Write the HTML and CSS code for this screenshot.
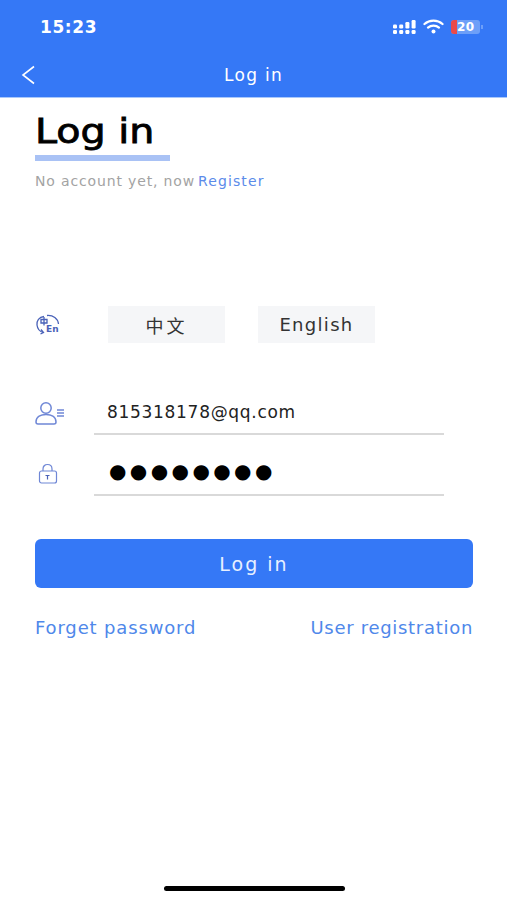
FILE: index.html
```html
<!DOCTYPE html>
<html lang="en">

<head>
    <meta charset="utf-8">
    <meta name="viewport" content="width=device-width, initial-scale=1.0">
    <title>Log in</title>
    <link rel="stylesheet" href="styles.css">
</head>

<body>

    <header class="topbar">
        <div class="status">
            <span class="tid">15:23</span>
            <div class="status-ikoner">
                <svg class="signal" width="23" height="14" viewBox="0 0 23 14">
                    <g fill="#fff">
                        <rect x="0" y="4.5" width="4" height="4" rx="1.2" />
                        <rect x="0" y="10" width="4" height="4" rx="1.2" />
                        <rect x="6.2" y="4.5" width="4" height="4" rx="1.2" />
                        <rect x="6.2" y="10" width="4" height="4" rx="1.2" />
                        <rect x="12.4" y="2" width="4" height="6.5" rx="1.2" />
                        <rect x="12.4" y="10" width="4" height="4" rx="1.2" />
                        <rect x="18.6" y="0" width="4" height="8.5" rx="1.2" />
                        <rect x="18.6" y="10" width="4" height="4" rx="1.2" />
                    </g>
                </svg>
                <svg class="wifi" width="21" height="15" viewBox="0 0 21 15">
                    <g fill="none" stroke="#fff" stroke-width="2.3" stroke-linecap="round">
                        <path d="M1.5 5 C6.5 0.6 14.5 0.6 19.5 5" />
                        <path d="M5 8.6 C8 6 13 6 16 8.6" />
                    </g>
                    <circle cx="10.5" cy="12.4" r="2" fill="#fff" />
                </svg>
                <div class="batteri">
                    <span class="batteri-rod"></span>
                    <span class="batteri-tal">20</span>
                </div>
            </div>
        </div>
        <nav class="navbar">
            <svg class="tilbage" width="14" height="20" viewBox="0 0 14 20">
                <path d="M13 1.5 L2 10 L13 18.5" fill="none" stroke="#fff" stroke-width="1.6" />
            </svg>
            <span class="navbar-titel">Log in</span>
        </nav>
    </header>

    <main class="indhold">
        <h1 class="titel"><span class="titel-tekst">Log in</span></h1>
        <p class="ingen-konto">No account yet, now<a class="register">Register</a></p>

        <div class="sprog-raekke">
            <svg class="ikon" width="26" height="22" viewBox="0 0 26 22">
                <g fill="none" stroke="#4a62b8" stroke-width="1.3">
                    <path d="M9 2.5 C4 3 1.5 7 2 11 C2.5 15 5 17.5 8 18.5" />
                    <path d="M6 15.5 L8.5 18.5 L5.5 20" />
                    <path d="M12 1.5 C18 1 23 4.5 23.5 10" />
                    <path d="M6 5.5 H12 V9 H6 Z M9 3 V11.5" />
                </g>
                <text class="ikon-en" x="11" y="18">En</text>
            </svg>
            <div class="sprog-knapper">
                <span class="sprog sprog-cn">中文</span>
                <span class="sprog">English</span>
            </div>
        </div>

        <div class="felt felt-bruger">
            <svg class="ikon" width="30" height="24" viewBox="0 0 30 24">
                <g fill="none" stroke="#6f87d6" stroke-width="1.5">
                    <circle cx="11" cy="7" r="5.2" />
                    <path d="M1 21 C1 15.5 6 13.5 11 13.5 C16 13.5 21 15.5 21 21 C21 22.5 20 23 19 23 H3 C2 23 1 22.5 1 21 Z" />
                    <path d="M22 9 H29 M22 12 H29 M22 15 H29" stroke-width="1.3" />
                </g>
            </svg>
            <span class="vaerdi">815318178@qq.com</span>
        </div>

        <div class="felt felt-kode">
            <svg class="ikon" width="22" height="22" viewBox="0 0 22 22">
                <g fill="none" stroke="#6f87d6" stroke-width="1.2">
                    <path d="M6 8 V6 C6 3.2 8 1.5 10.5 1.5 C13 1.5 15 3.2 15 6 V8" />
                    <rect x="2.5" y="8" width="17" height="12" rx="2" />
                    <path d="M8.5 12.5 H12.5 M10.5 12.5 V16.5" stroke="#4a62b8" />
                </g>
            </svg>
            <span class="vaerdi prikker">●●●●●●●●</span>
        </div>

        <button class="login">Log in</button>

        <div class="links">
            <a class="link-glemt">Forget password</a>
            <a class="link-bruger">User registration</a>
        </div>
    </main>

    <div class="hjem"></div>

</body>

</html>
```

FILE: styles.css
```css
* {
    box-sizing: border-box;
}

body {
    margin: 0;
    height: 900px;
    overflow: hidden;
    background-color: #fff;
    font-family: "DejaVu Sans", "Noto Sans CJK SC", sans-serif;
    position: relative;
}

.topbar {
    background-color: #3578f6;
    color: #fff;
    height: 98px;
    border-bottom: 1px solid #a9c8fb;
}

.status {
    height: 53px;
    padding: 0 27px 0 40px;
    display: flex;
    justify-content: space-between;
    align-items: center;
}

.tid {
    font-size: 17px;
    font-weight: bold;
    letter-spacing: 0.6px;
}

.status-ikoner {
    display: flex;
    align-items: center;
    gap: 7px;
}

.batteri {
    width: 29px;
    height: 14px;
    border-radius: 3px;
    background-color: #6d9ff8;
    display: flex;
    align-items: center;
    position: relative;
}

.batteri::after {
    content: "";
    position: absolute;
    right: -3px;
    top: 5px;
    width: 2px;
    height: 4px;
    background-color: #6d9ff8;
}

.batteri-rod {
    width: 6px;
    height: 14px;
    border-radius: 3px 0 0 3px;
    background-color: #ea4a4a;
}

.batteri-tal {
    font-size: 12px;
    font-weight: bold;
    letter-spacing: 0.5px;
}

.navbar {
    height: 44px;
    position: relative;
    display: flex;
    align-items: center;
    justify-content: center;
}

.tilbage {
    position: absolute;
    left: 21px;
    top: 12px;
}

.navbar-titel {
    font-size: 17px;
    letter-spacing: 1.3px;
}

.indhold {
    padding: 0 34px 0 35px;
}

.titel {
    display: inline-block;
    width: 135px;
    margin: 14px 0 0;
    padding-bottom: 4px;
    border-bottom: 6px solid #a9c2f5;
    font-size: 33px;
    line-height: 39px;
    font-weight: normal;
    -webkit-text-stroke: 0.8px #000;
    color: #000;
}

.titel-tekst {
    display: inline-block;
    transform: scaleX(1.2);
    transform-origin: left;
}

.ingen-konto {
    margin: 12px 0 0;
    font-size: 14px;
    letter-spacing: 0.85px;
    color: #a3a3a3;
}

.register {
    margin-left: 3px;
    letter-spacing: 1.1px;
    color: #5b8bea;
}

.sprog-raekke {
    margin-top: 117px;
    display: flex;
    align-items: center;
}

.ikon {
    flex: none;
}

.ikon-en {
    font-size: 9px;
    font-weight: bold;
    fill: #4a62b8;
}

.sprog-knapper {
    display: flex;
    gap: 33px;
    margin-left: 47px;
}

.sprog {
    width: 117px;
    height: 37px;
    background-color: #f5f6f8;
    display: flex;
    align-items: center;
    justify-content: center;
    font-size: 18px;
    letter-spacing: 1.3px;
    color: #333;
}

.sprog-cn {
    letter-spacing: 3px;
}

.felt {
    position: relative;
    height: 61px;
    padding-left: 59px;
    display: flex;
    align-items: center;
}

.felt-bruger {
    margin-top: 31px;
}

.felt .ikon {
    position: absolute;
    left: 0;
    top: 27px;
}

.felt-kode .ikon {
    left: 2px;
    top: 28px;
}

.vaerdi {
    width: 350px;
    height: 61px;
    margin-right: 29px;
    padding: 16px 0 0 13px;
    display: flex;
    align-items: center;
    border-bottom: 2px solid #d9d9d9;
    font-size: 17px;
    letter-spacing: 0.7px;
    color: #222;
}

.prikker {
    padding: 12px 0 0 15px;
    font-size: 20px;
    letter-spacing: 3.4px;
    color: #000;
}

.login {
    display: block;
    width: 100%;
    height: 49px;
    margin-top: 43px;
    border: 0;
    border-radius: 6px;
    background-color: #3578f6;
    color: #e8f0ff;
    font-family: inherit;
    font-size: 19px;
    letter-spacing: 2px;
}

.links {
    margin-top: 29px;
    display: flex;
    justify-content: space-between;
    font-size: 18px;
    color: #4f88ea;
}

.link-glemt {
    letter-spacing: 0.85px;
}

.link-bruger {
    letter-spacing: 0.7px;
}

.hjem {
    position: absolute;
    left: 164px;
    bottom: 9px;
    width: 181px;
    height: 5px;
    border-radius: 3px;
    background-color: #000;
}
```
